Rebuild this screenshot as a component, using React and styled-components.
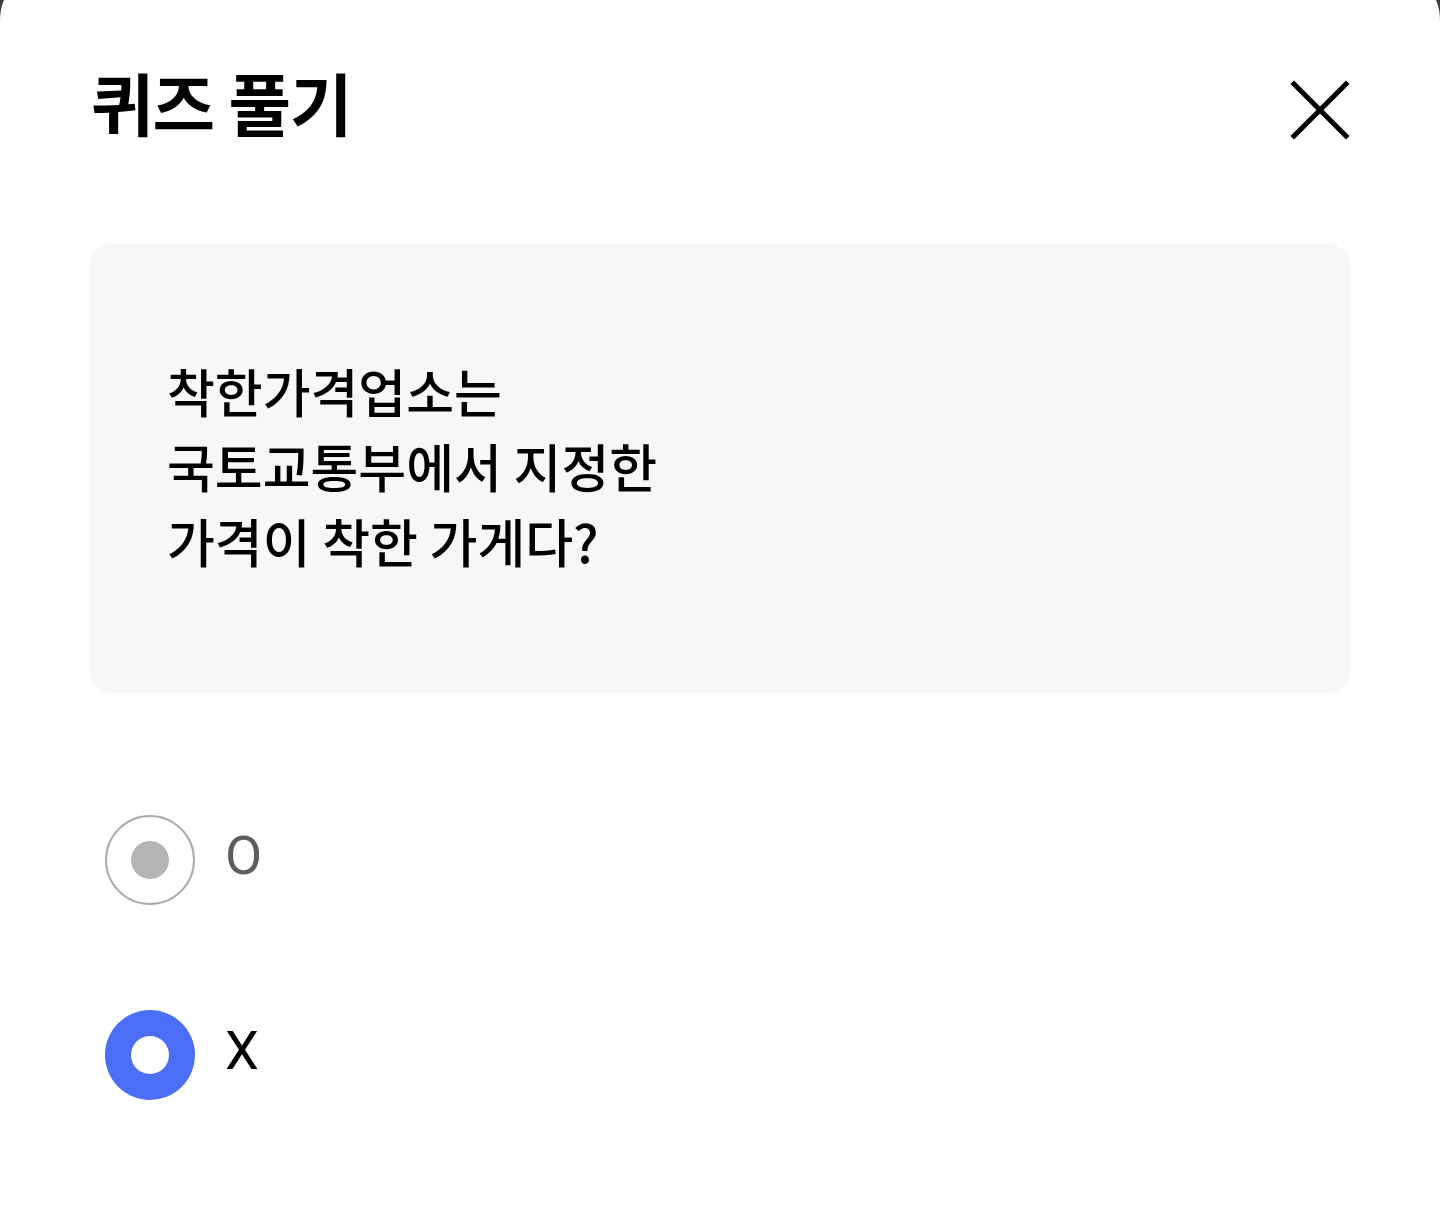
import React, { useState } from 'react';
import styled, { createGlobalStyle } from 'styled-components';

const GlobalStyle = createGlobalStyle`
  html, body {
    margin: 0;
    padding: 0;
    background: #3d3d3d;
    overflow: hidden;
  }
  body {
    font-family: "Noto Sans CJK KR", "Noto Sans", sans-serif;
  }
`;

const Sheet = styled.div`
  margin-top: -32px;
  padding: 64px 90px 0;
  min-height: calc(100vh + 32px);
  background: #fff;
  border-radius: 52px 52px 0 0;
  box-sizing: border-box;
`;

const Header = styled.div`
  display: flex;
  align-items: center;
  justify-content: space-between;
  height: 150px;
  padding-top: 6px;
  box-sizing: border-box;
`;

const Title = styled.h1`
  margin: -18px 0 0 1px;
  font-size: 68px;
  font-weight: 700;
  color: #000;
  letter-spacing: -1px;
`;

const CloseButton = styled.button`
  display: flex;
  align-items: center;
  justify-content: center;
  width: 70px;
  height: 70px;
  margin-right: -5px;
  padding: 0;
  border: none;
  background: none;
  cursor: pointer;
`;

const QuestionCard = styled.div`
  display: flex;
  align-items: center;
  margin-top: 62px;
  height: 449px;
  padding: 0 77px;
  background: #f7f7f7;
  border-radius: 22px;
  box-sizing: border-box;
`;

const QuestionText = styled.p`
  margin: -6px 0 0;
  font-size: 52px;
  font-weight: 500;
  line-height: 75px;
  color: #000;
`;

const Options = styled.div`
  display: flex;
  flex-direction: column;
  gap: 105px;
  margin-top: 122px;
  padding-left: 15px;
`;

const Option = styled.label`
  display: flex;
  align-items: center;
  gap: 30px;
  height: 90px;
  cursor: pointer;
`;

const RadioCircle = styled.span`
  display: flex;
  align-items: center;
  justify-content: center;
  width: 90px;
  height: 90px;
  border-radius: 50%;
  box-sizing: border-box;
  border: ${(p) => (p.$checked ? 'none' : '2px solid #ababab')};
  background: ${(p) => (p.$checked ? '#4a6ef6' : '#fff')};

  &::after {
    content: '';
    width: 38px;
    height: 38px;
    border-radius: 50%;
    background: ${(p) => (p.$checked ? '#fff' : '#b4b4b4')};
  }
`;

const OptionLabel = styled.span`
  font-family: Roboto, "Noto Sans", sans-serif;
  font-size: 54px;
  font-weight: 400;
  color: ${(p) => (p.$checked ? '#000' : '#5e5e5e')};
  margin-top: -10px;
`;

const CloseIcon = () => (
  <svg width="60" height="60" viewBox="0 0 60 60">
    <path d="M4 4 L56 56 M56 4 L4 56" stroke="#000" strokeWidth="5" strokeLinecap="square" />
  </svg>
);

export default function App() {
  const [answer, setAnswer] = useState('X');
  return (
    <>
      <GlobalStyle />
      <Sheet>
        <Header>
          <Title>퀴즈 풀기</Title>
          <CloseButton aria-label="닫기">
            <CloseIcon />
          </CloseButton>
        </Header>
        <QuestionCard>
          <QuestionText>
            착한가격업소는
            <br />
            국토교통부에서 지정한
            <br />
            가격이 착한 가게다?
          </QuestionText>
        </QuestionCard>
        <Options>
          {['O', 'X'].map((v) => (
            <Option key={v} onClick={() => setAnswer(v)}>
              <RadioCircle $checked={answer === v} />
              <OptionLabel $checked={answer === v}>{v}</OptionLabel>
            </Option>
          ))}
        </Options>
      </Sheet>
    </>
  );
}
